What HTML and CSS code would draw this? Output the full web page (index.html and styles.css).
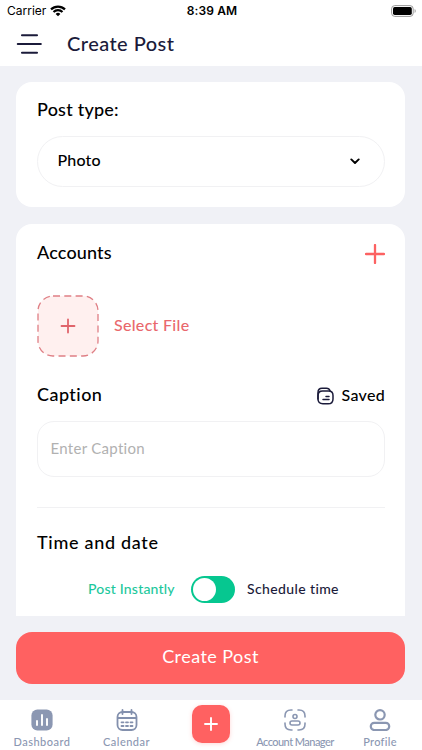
FILE: index.html
```html
<!DOCTYPE html>
<html lang="en">
<head>
<meta charset="utf-8">
<title>Create Post</title>
<link rel="stylesheet" href="styles.css">
</head>
<body>
<div class="app">
  <div class="status">
    <div class="carrier"><span>Carrier</span>
      <svg width="16" height="12" viewBox="0 0 16 12" fill="none" stroke="#000" stroke-width="2.200"><path d="M1 4.400a10 10 0 0 1 14 0M3.500 7a6.500 6.500 0 0 1 9 0"/><path d="M8 11.300 5.600 8.900a3.500 3.500 0 0 1 4.800 0z" fill="#000" stroke="none"/></svg>
    </div>
    <div class="clock">8:39 AM</div>
    <svg class="battery" width="26" height="12" viewBox="0 0 26 12"><rect x=".6" y=".6" width="21.600" height="10.800" rx="3.200" fill="#fff" stroke="#999"/><rect x="2" y="2" width="18.800" height="8" rx="1.700"/><path d="M23.600 4v4c1.500-.6 1.500-3.400 0-4z" fill="#999"/></svg>
  </div>
  <header class="header">
    <svg width="26" height="22" viewBox="0 0 26 22" stroke="#1b1b3a" stroke-width="2.100" stroke-linecap="round"><path d="M6 2.200h15M1.800 11h23M6 19.800h15"/></svg>
    <h1 class="title">Create Post</h1>
  </header>
  <main class="content">
    <section class="card type-card">
      <h2 class="heading post-type">Post type:</h2>
      <div class="select"><span class="photo">Photo</span>
        <svg width="10" height="7" viewBox="0 0 10 7" fill="none" stroke="#000" stroke-width="1.900" stroke-linecap="round" stroke-linejoin="round"><path d="M1.300 1.400 5 5l3.700-3.600"/></svg>
      </div>
    </section>
    <section class="card form-card">
      <div class="row accounts-row"><h2 class="heading accounts">Accounts</h2>
        <svg width="20" height="20" viewBox="0 0 20 20" stroke="#fc6262" stroke-width="2.300" stroke-linecap="round"><path d="M10 1v18M1 10h18"/></svg>
      </div>
      <div class="file-row">
        <svg width="62" height="62" viewBox="0 0 62 62" fill="none"><rect x="1" y="1" width="60" height="60" rx="15" fill="#fff0ef" stroke="#df7f85" stroke-width="1.300" stroke-dasharray="7 4.300"/><path d="M31 24.500v13M24.500 31h13" stroke="#e0646b" stroke-width="1.800" stroke-linecap="round"/></svg>
        <span class="select-file">Select File</span>
      </div>
      <div class="row caption-row"><h2 class="heading caption">Caption</h2>
        <div class="saved-link">
          <svg class="saved-icon" width="17" height="18" viewBox="0 0 17 18" fill="none" stroke="#1b1b3a" stroke-width="1.500" stroke-linecap="round"><path d="M1 12V5.500C1 2.500 2.500 1.200 5 1.200h4.500c2 0 3 .9 3.500 2.500"/><path d="M1 8.500c0-3 1.600-4.600 4.600-4.600h6c3 0 4.400 1.500 4.400 4.500v3.500c0 3.300-1.600 4.900-4.900 4.900H5.900C2.600 16.800 1 15.200 1 11.900zM9 9.500h3M6 12.500h6"/></svg>
          <span class="saved">Saved</span>
        </div>
      </div>
      <div class="field"><span class="placeholder">Enter Caption</span></div>
      <hr class="rule">
      <h2 class="heading time">Time and date</h2>
      <div class="schedule"><span class="instant">Post Instantly</span><span class="toggle"><i class="knob"></i></span><span class="later">Schedule time</span></div>
    </section>
  </main>
  <div class="submit-bar"><div class="submit"><span class="submit-text">Create Post</span></div></div>
  <nav class="nav">
    <div class="item dashboard">
      <svg width="22" height="22" viewBox="0 0 22 22"><rect x=".4" y=".4" width="21.200" height="21.200" rx="6" fill="#8b97b2"/><path d="M6 12v4M11 6v10M16 10v6" stroke="#fff" stroke-width="1.900" stroke-linecap="round"/></svg>
      <span class="label l-dashboard">Dashboard</span>
    </div>
    <div class="item calendar">
      <svg width="22" height="22" viewBox="0 0 22 22" fill="none" stroke="#8390ad" stroke-width="1.800" stroke-linecap="round"><rect x="1.500" y="3" width="19" height="18" rx="5"/><path d="M6.500 1v4M15.500 1v4M2 9h18"/><path d="M5.500 13.300h2M10 13.300h2M14.500 13.300h2M5.500 17h2M10 17h2M14.500 17h2" stroke-width="1.800"/></svg>
      <span class="label l-calendar">Calendar</span>
    </div>
    <div class="add"><svg width="16" height="16" viewBox="0 0 16 16" stroke="#fff" stroke-width="1.900" stroke-linecap="round"><path d="M8 2v12M2 8h12"/></svg></div>
    <div class="item manager">
      <svg width="22" height="22" viewBox="0 0 22 22" fill="none" stroke="#8b97b2" stroke-width="1.600" stroke-linecap="round"><path d="M1 8V7c0-4 2-6 6-6h1M14 1h1c4 0 6 2 6 6v1M21 14v1c0 4-2 6-6 6h-1M8 21H7c-4 0-6-2-6-6v-1"/><circle cx="11" cy="7.500" r="2"/><rect x="6" y="12" width="10" height="4" rx="2"/></svg>
      <span class="label l-manager">Account Manager</span>
    </div>
    <div class="item profile">
      <svg width="22" height="22" viewBox="0 0 22 22" fill="none" stroke="#8b97b2" stroke-width="2.200"><circle cx="11" cy="5.800" r="4.700"/><rect x="1.800" y="13.800" width="18.400" height="7.200" rx="3.400"/></svg>
      <span class="label l-profile">Profile</span>
    </div>
  </nav>
</div>
</body>
</html>
```
FILE: styles.css
```css
* { box-sizing: border-box; }
body { margin: 0; font-family: Lato, "Open Sans", sans-serif; background: #f0f1f6; color: #000; font-variant-ligatures: none; }
svg { display: block; flex: none; }
span, h1, h2 { white-space: nowrap; }
.app { width: 422px; height: 750px; display: flex; flex-direction: column; overflow: hidden; }
.status { height: 22px; flex: none; background: #fff; display: grid; grid-template-columns: 1fr auto 1fr; align-items: center; padding: 0 5px 0 7px; font: 12.300px/22px Inter, sans-serif; }
.carrier { display: flex; align-items: center; gap: 4px; font-size: 12px; }
.clock { font-weight: 600; font-size: 12px; letter-spacing: .1px; }
.battery { justify-self: end; }
.header { height: 44px; flex: none; background: #fff; display: flex; align-items: center; gap: 25px; padding: 0 16px 1px; }
.title { margin: 0; font-size: 20px; line-height: 24px; font-weight: 500; letter-spacing: .45px; color: #1b1b3a; padding-bottom: 2px; }
.content { height: 550px; flex: none; overflow: hidden; padding: 16px 17px 0 16px; }
.card { background: #fff; border-radius: 16px; padding: 0 20px 0 21px; }
.type-card { height: 125px; padding-top: 15px; }
.heading { margin: 0; font-size: 18px; line-height: 24px; font-weight: 500; }
.post-type { letter-spacing: .22px; }
.accounts { letter-spacing: .15px; padding-bottom: 4px; }
.caption { letter-spacing: .45px; padding-bottom: 2px; }
.time { letter-spacing: .7px; }
.select { height: 51px; margin-top: 15px; border: 1px solid #f1f1f3; border-radius: 26px; display: flex; align-items: center; justify-content: space-between; padding: 0 24px 1px 19.500px; font-size: 16px; font-weight: 500; }
.photo { letter-spacing: .15px; padding-bottom: 4px; }
.form-card { margin-top: 17px; height: 460px; padding-top: 17px; }
.row { display: flex; align-items: center; justify-content: space-between; }
.accounts-row { height: 26px; }
.file-row { display: flex; align-items: center; gap: 15px; margin-top: 28px; height: 62px; color: #e9686d; font-size: 16px; font-weight: 500; }
.select-file { letter-spacing: .3px; padding-bottom: 4px; }
.caption-row { height: 26px; margin-top: 25px; }
.saved-link { display: flex; align-items: center; gap: 8px; font-size: 16px; font-weight: 500; }
.saved-icon { margin-top: 2px; }
.saved { letter-spacing: .3px; padding-bottom: 2px; }
.field { height: 56px; margin-top: 13px; border: 1px solid #f1f1f3; border-radius: 17px; padding: 0 12.500px 3px; display: flex; align-items: center; color: #b1b1b1; font-size: 15px; letter-spacing: .3px; }
.rule { border: 0; height: 1px; background: #f1f1f3; margin: 30px 0 22px; }
.schedule { display: flex; align-items: center; margin: 21px 0 0 51px; height: 28px; font-size: 14px; font-weight: 500; }
.instant { color: #1dc89c; width: 103px; letter-spacing: .2px; padding-bottom: 2px; }
.toggle { width: 44px; height: 27px; border-radius: 14px; background: #06c790; padding: 2px; margin-right: 12px; flex: none; }
.knob { display: block; width: 23px; height: 23px; border-radius: 50%; background: #fff; }
.later { color: #1b1b3a; letter-spacing: .38px; padding-bottom: 2px; }
.submit-bar { height: 84px; flex: none; padding: 16px 17px 16px 16px; }
.submit { height: 52px; border-radius: 16px; background: #ff6161; color: #fff; display: flex; align-items: center; justify-content: center; font-size: 18px; letter-spacing: .45px; padding-bottom: 5px; }
.nav { height: 50px; background: #fff; display: grid; grid-template-columns: 84px 85px 83px 86px 84px; align-items: start; }
.item { display: flex; flex-direction: column; align-items: center; padding-top: 9px; color: #8b97b2; }
.label { font-size: 11px; line-height: 14px; margin-top: 4px; font-weight: 500; letter-spacing: .5px; }
.l-manager { letter-spacing: -.55px; }
.l-profile { letter-spacing: .3px; }
.add { width: 38px; height: 38px; margin-top: 5px; border-radius: 10px; background: #ff6161; justify-self: center; display: flex; align-items: center; justify-content: center; box-shadow: 0 1px 4px rgba(255, 97, 97, .25); }
```
